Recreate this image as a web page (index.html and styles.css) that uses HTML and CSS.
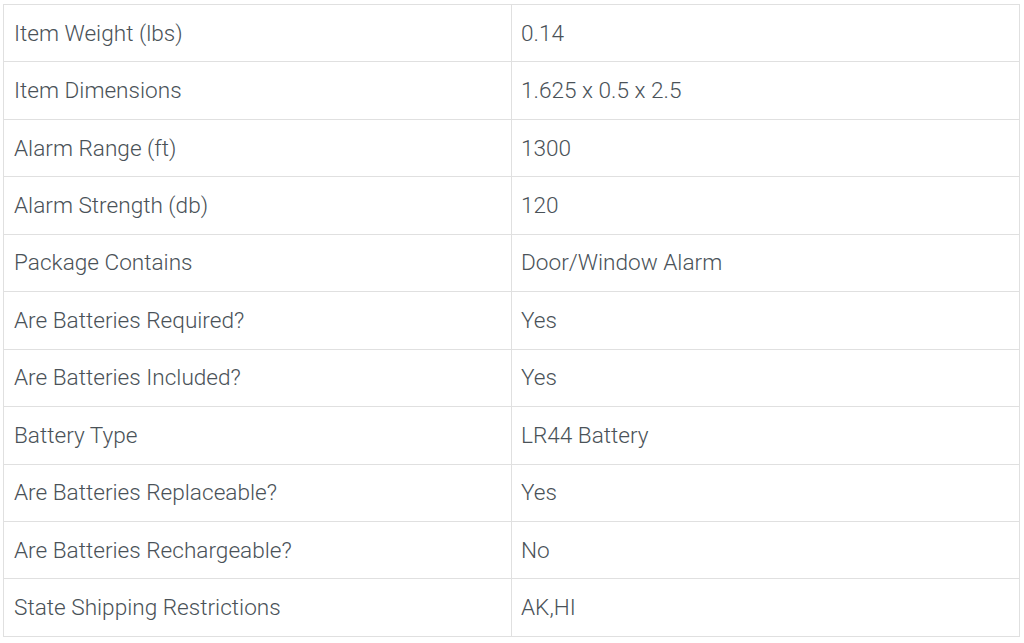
FILE: index.html
```html
<!DOCTYPE html>
<html>
<head>
<meta charset="utf-8">
<link rel="stylesheet" href="styles.css">
</head>
<body>
<table class="spec">
<tbody>
<tr><td>Item Weight (lbs)</td><td>0.14</td></tr>
<tr><td>Item Dimensions</td><td>1.625 x 0.5 x 2.5</td></tr>
<tr><td>Alarm Range (ft)</td><td>1300</td></tr>
<tr><td>Alarm Strength (db)</td><td>120</td></tr>
<tr><td>Package Contains</td><td>Door/Window Alarm</td></tr>
<tr><td>Are Batteries Required?</td><td>Yes</td></tr>
<tr><td>Are Batteries Included?</td><td>Yes</td></tr>
<tr><td>Battery Type</td><td>LR44 Battery</td></tr>
<tr><td>Are Batteries Replaceable?</td><td>Yes</td></tr>
<tr><td>Are Batteries Rechargeable?</td><td>No</td></tr>
<tr><td>State Shipping Restrictions</td><td>AK,HI</td></tr>
</tbody>
</table>
</body>
</html>
```
FILE: styles.css
```css
html, body {
  margin: 0;
  padding: 0;
  background: #ffffff;
}
body {
  padding: 4px 4px 0 3px;
}
.spec {
  width: 1017px;
  border-collapse: collapse;
  table-layout: fixed;
  font-family: Roboto, "Liberation Sans", sans-serif;
  font-weight: 300;
  font-size: 22.6px;
  color: #4a5258;
}
.spec td {
  border: 1px solid #e0e0e0;
  height: 57.45px;
  padding: 0 10px;
  vertical-align: middle;
  box-sizing: border-box;
  width: 50%;
}
.spec td + td {
  padding-left: 9px;
}
```
